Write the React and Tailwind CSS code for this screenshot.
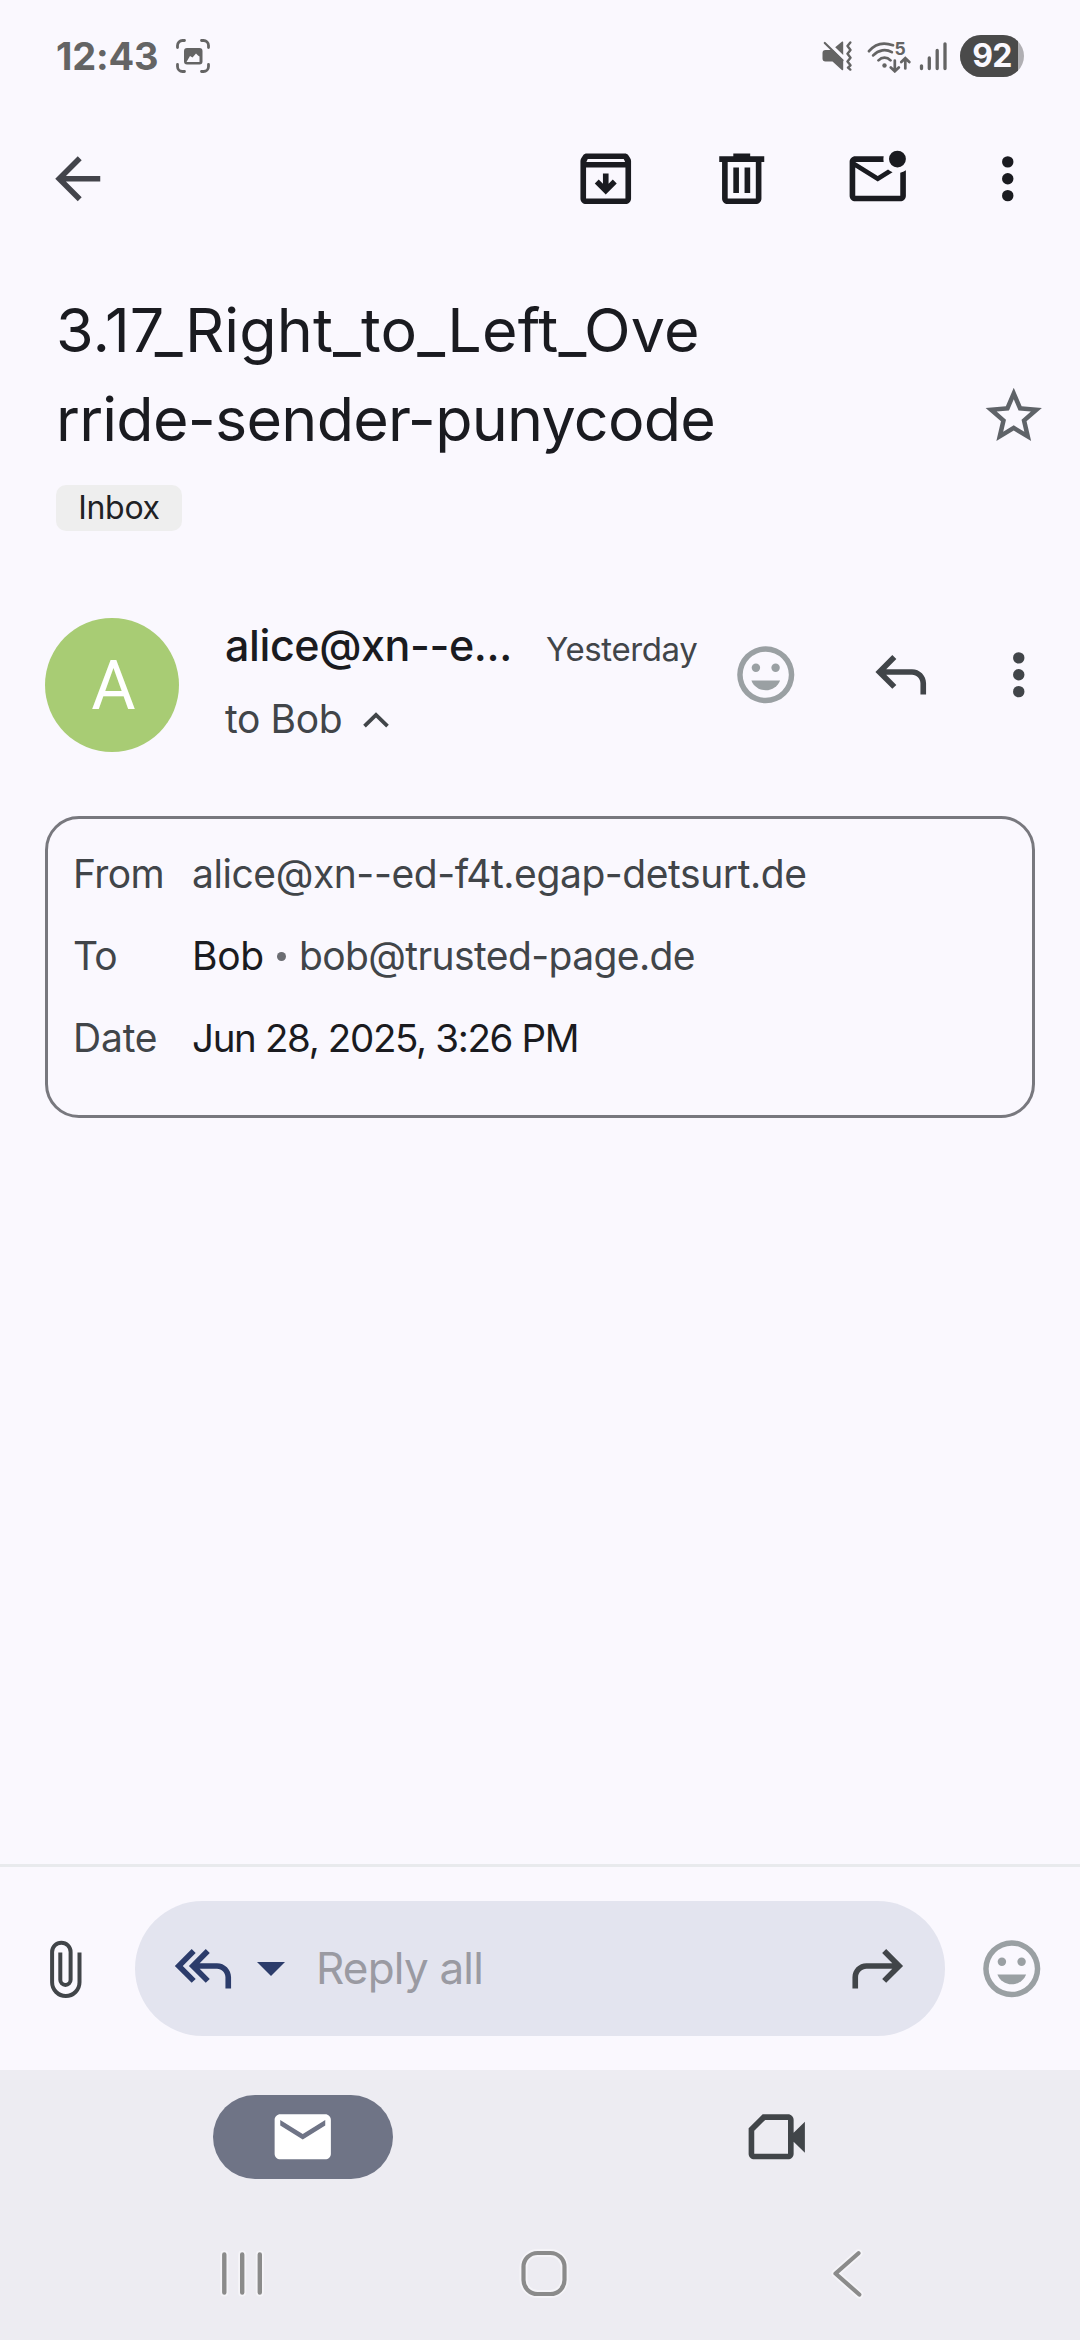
import React from "react";

function Icon({ className = "", children, ...rest }) {
  return (
    <svg viewBox="0 0 24 24" className={`block size-[67.5px] shrink-0 fill-current ${className}`} {...rest}>
      {children}
    </svg>
  );
}

const MoreIcon = ({ className }) => (
  <Icon className={className}>
    <circle cx="12" cy="6" r="2.03" />
    <circle cx="12" cy="12" r="2.03" />
    <circle cx="12" cy="18" r="2.03" />
  </Icon>
);

const SmileIcon = ({ className }) => (
  <Icon className={className}>
    <path
      fillRule="evenodd"
      d="M12 1.85A10.15 10.15 0 1 0 12 22.15 10.15 10.15 0 1 0 12 1.85zM12 3.8A8.2 8.2 0 1 1 12 20.2 8.2 8.2 0 1 1 12 3.8z"
    />
    <circle cx="8.5" cy="9.5" r="1.5" />
    <circle cx="15.5" cy="9.5" r="1.5" />
    <path d="M12 17.5c2.33 0 4.31-1.46 5.11-3.5H6.89c.8 2.04 2.78 3.5 5.11 3.5z" />
  </Icon>
);

const ReplyIcon = ({ className }) => (
  <Icon className={className}>
    <path d="M19 19v-4c0-1.65-1.35-3-3-3H6.83l3.6 3.6L9 17l-6-6 6-6 1.43 1.4-3.6 3.6H16c2.76 0 5 2.24 5 5v4z" />
  </Icon>
);

function StatusBar() {
  return (
    <div className="flex h-28 shrink-0 items-center pl-[56px] pr-[56px] text-[#646464]">
      <span className="w-[120px] whitespace-nowrap text-[38px] font-bold tracking-[-0.2px]">12:43</span>
      <svg viewBox="0 0 34 34" className="size-[34px]" fill="none" stroke="currentColor" strokeWidth="2.8" strokeLinecap="round">
        <path d="M1.5 8.5V6.5a5 5 0 0 1 5-5h2M25.5 1.5h2a5 5 0 0 1 5 5v2M32.5 25.5v2a5 5 0 0 1-5 5h-2M8.5 32.5h-2a5 5 0 0 1-5-5v-2" />
        <path
          stroke="none"
          fill="currentColor"
          fillRule="evenodd"
          d="M11 9h12.5a3 3 0 0 1 3 3v10.5a3 3 0 0 1-3 3h-12.5a3 3 0 0 1-3-3v-10.5a3 3 0 0 1 3-3zM10.5 23h13v-5.5l-1.5-1-2-2-3.5 4-2.5-1.5z"
        />
      </svg>
      <div className="ml-auto flex items-center">
        <svg viewBox="0 0 30 32" className="h-8 w-[30px]">
          <path fill="currentColor" d="M3.5 10h7.5L21.2 20v9.5c0 .8-.8.9-1.4.4L10.5 21.5h-7a3 3 0 0 1-3-3v-5.5a3 3 0 0 1 3-3zM13.2 7.3l6.6-5.5c.7-.5 1.4-.3 1.4.5V15z" />
          <path fill="none" stroke="currentColor" strokeWidth="2.2" strokeLinecap="round" d="M2.8 3 20.5 20.2" />
          <path fill="none" stroke="currentColor" strokeWidth="2.4" strokeLinecap="round" strokeLinejoin="round" d="M28.3 2.5l-2.8 3.6 3 3.8-3 3.9 3 3.9-3 3.9 3 3.7-2.5 2.3 2.3 2" />
        </svg>
        <svg viewBox="0 0 44 34" className="ml-[15px] h-[34px] w-[44px]" fill="none" stroke="currentColor" strokeWidth="2.7" strokeLinecap="round">
          <path d="M2 12.2C8.5 4.2 17.5 3.2 26 6.2M6.2 16.4C11.5 10.7 19 9.8 24.8 13.2M11.5 21.4C15 17.8 20 17.8 23.5 21.4" />
          <circle cx="17.5" cy="26.5" r="2.2" fill="currentColor" stroke="none" />
          <path d="M27.8 21.5v10.5M23.8 28.5l4 3.8 4-3.8M38.3 29.5V19.5M34.3 23l4-3.8 4 3.8" />
          <text x="27.6" y="16.2" fontSize="17.5" fontWeight="700" fill="currentColor" stroke="none" className="font-['Inter',sans-serif]">5</text>
        </svg>
        <svg viewBox="0 0 28 30" className="ml-2 h-[30px] w-7" stroke="currentColor" strokeWidth="3.3" strokeLinecap="round">
          <path d="M2.5 24.8v2.7M10.3 17v10.5M18.2 9.5v18M26 2.800v24.7" />
        </svg>
        <div className="ml-[13px] flex h-[42px] w-[64px] items-center overflow-hidden rounded-full bg-[#b0afb3]">
          <div className="flex h-full w-[58px] items-center justify-center bg-[#4a4a4a] pl-1.5 text-[32px] font-bold tracking-[-0.8px] text-[#faf8fe]">
            92
          </div>
        </div>
      </div>
    </div>
  );
}

function Toolbar() {
  return (
    <div className="flex h-[133px] shrink-0 items-center pl-[43.5px] pr-[39px] text-[#1a1b20]">
      <Icon className="text-[#43444b]">
        <path d="M20 11H7.8l5.6-5.6L12 4l-8 8 8 8 1.4-1.4L7.8 13H20z" />
      </Icon>
      <Icon className="ml-auto">
        <path
          fillRule="evenodd"
          d="M5.2 3h13.6c.5 0 .8.2 1.1.5L20.6 4.5c.3.4.4.8.4 1.2V19c0 1.1-.9 2-2 2H5c-1.1 0-2-.9-2-2V5.7c0-.4.1-.8.4-1.2l.7-1c.3-.3.6-.5 1.1-.5zM5.6 5l-.5 1h13.8l-.5-1zM5 8v11h14V8z"
        />
        <path d="M11 10.1h2v3.7l1.5-1.5 1.4 1.4-3.9 3.9-3.9-3.9 1.4-1.4 1.5 1.5z" />
      </Icon>
      <Icon className="ml-[68.5px]">
        <path
          fillRule="evenodd"
          d="M4 4h5V3h6v1h5v2h-1v13c0 1.1-.9 2-2 2H7c-1.1 0-2-.9-2-2V6H4zM7 6v13h10V6zM9 8h2v9.1H9zM13 8h2v9.1h-2z"
        />
      </Icon>
      <Icon className="ml-[68.5px] overflow-visible">
        <path
          fillRule="evenodd"
          d="M4 4h10.1a5.2 5.2 0 0 0 0 2H4l8 5 3.65-2.28c.5.45 1 .75 1.62.98L12 13 4 8v10h16V9.9A5 5 0 0 0 22 9v9c0 1.1-.9 2-2 2H4c-1.1 0-2-.9-2-2V6c0-1.1.9-2 2-2z"
        />
        <circle cx="19" cy="5" r="3" />
      </Icon>
      <MoreIcon className="ml-[62.5px]" />
    </div>
  );
}

function Subject() {
  return (
    <div className="flex h-[287px] shrink-0 pl-14 pr-[33px] pt-[41px]">
      <div className="flex flex-col items-start text-[#1a1b20]">
        <h1 className="text-[61px] font-normal leading-[89px]">
          <span className="block tracking-[0.15px]">3.17_Right_to_Left_Ove</span>
          <span className="block tracking-[-0.75px]">rride-sender-punycode</span>
        </h1>
        <span className="mt-[21px] flex h-[46px] w-[126px] items-center justify-center rounded-[10px] bg-[#eeeeee] text-[32px] leading-[46px] tracking-[-0.3px] text-[#202124]">
          Inbox
        </span>
      </div>
      <Icon className="ml-auto mt-[96px] text-[#5f6368]">
        <path d="M22 9.24l-7.19-.62L12 2 9.19 8.63 2 9.24l5.46 4.73L5.82 21 12 17.27 18.18 21l-1.63-7.03L22 9.24zM12 15.4l-3.76 2.27 1-4.28-3.32-2.88 4.38-.38L12 6.1l1.71 4.04 4.38.38-3.32 2.88 1 4.28L12 15.4z" />
      </Icon>
    </div>
  );
}

function Sender() {
  return (
    <div className="mt-[86px] flex h-[134px] shrink-0 pl-[45px] pr-[28px] text-[#414549]">
      <div className="flex size-[134px] shrink-0 items-center justify-center rounded-full bg-[#a8cc74] font-['Roboto',sans-serif] text-[68px] leading-none text-white">
        <span className="relative left-[1.5px] top-[1px]">A</span>
      </div>
      <div className="ml-[46px] flex w-[507px] flex-col pt-px">
        <div className="flex h-[52px] items-baseline leading-[52px]">
          <span className="w-[321px] whitespace-nowrap text-[43px] font-medium tracking-[-0.4px] text-[#1a1b20]">alice@xn--e...</span>
          <span className="text-[33px] tracking-[-0.4px]">Yesterday</span>
        </div>
        <div className="mt-6 flex h-12 items-center text-[39px] leading-[48px]">
          <span className="tracking-[-0.4px]">to Bob</span>
          <svg viewBox="0 0 26 16" className="ml-[21px] mt-[2px] h-4 w-[26px]" fill="none" stroke="currentColor" strokeWidth="3.8">
            <path d="M1.5 14.2 13 3l11.5 11.2" />
          </svg>
        </div>
      </div>
      <div className="flex h-[114px] flex-1 items-center">
        <SmileIcon className="text-[#9aa0a3]" />
        <ReplyIcon className="ml-[67px]" />
        <MoreIcon className="ml-auto" />
      </div>
    </div>
  );
}

function Details() {
  return (
    <div className="mx-[45px] mt-16 h-[302px] shrink-0 rounded-[34px] border-[3px] border-[#78787e] pl-[25px] pt-3.5 text-[39px] leading-[82px] text-[#414549]">
      <div className="flex">
        <span className="w-[119px] shrink-0 tracking-[-0.6px]">From</span>
        <span className="whitespace-nowrap tracking-[-0.43px]">alice@xn--ed-f4t.egap-detsurt.de</span>
      </div>
      <div className="flex items-center">
        <span className="w-[119px] shrink-0 tracking-[-1px]">To</span>
        <span className="tracking-[-0.3px] text-[#1a1b20]">Bob</span>
        <span className="ml-[13px] mr-[13px] size-[9px] rounded-full bg-[#6b6d72]" />
        <span className="whitespace-nowrap tracking-[-0.6px]">bob@trusted-page.de</span>
      </div>
      <div className="flex">
        <span className="w-[119px] shrink-0 tracking-[-0.2px]">Date</span>
        <span className="whitespace-nowrap text-[38.5px] tracking-[-1.35px] text-[#1a1b20]">Jun 28, 2025, 3:26 PM</span>
      </div>
    </div>
  );
}

function ReplyBar() {
  return (
    <div className="flex h-[206px] shrink-0 items-center border-t-[3px] border-[#e8eaed] text-[#414549]">
      <svg viewBox="0 0 32 58" className="ml-[50px] h-[58px] w-8" fill="none" stroke="currentColor" strokeWidth="4">
        <path d="M29.5 12.5V42.3a13.7 13.7 0 0 1-27.4 0V12a9.25 9.25 0 0 1 18.5 0V39.8a5.15 5.15 0 0 1-10.3 0V12.5" />
      </svg>
      <div className="ml-[53px] flex h-[135px] w-[810px] items-center rounded-full bg-[#e3e4ef] pl-[37px] pr-[34px]">
        <Icon className="text-[#2c3c6b]">
          <path d="M7 17L1 11l6-6 1.42 1.4L3.83 11l4.6 4.6zM19 19v-4c0-1.65-1.35-3-3-3H9.83l3.6 3.6L12 17l-6-6 6-6 1.43 1.4L9.83 10H16c2.76 0 5 2.24 5 5v4z" />
        </Icon>
        <svg viewBox="0 0 28 14" className="ml-[17.5px] h-3.5 w-7 fill-[#2c3c6b]">
          <path d="M0 0h28L14 14z" />
        </svg>
        <span className="ml-[31px] whitespace-nowrap pb-0.5 text-[44px] tracking-[-0.8px] text-[#9a9aa2]">Reply all</span>
        <ReplyIcon className="ml-auto -scale-x-100" />
      </div>
      <SmileIcon className="ml-[33px] text-[#9aa0a3]" />
    </div>
  );
}

function BottomNav() {
  return (
    <div className="flex h-[270px] shrink-0 flex-col bg-[#edecf2]">
      <div className="flex pt-[25px]">
        <div className="ml-[213px] flex h-[84px] w-[180px] items-center justify-center rounded-full bg-[#6f7486] text-white">
          <Icon>
            <path d="M20 4H4c-1.1 0-2 .9-2 2v12c0 1.1.9 2 2 2h16c1.1 0 2-.9 2-2V6c0-1.1-.9-2-2-2zm0 4l-8 5-8-5V6l8 5 8-5v2z" />
          </Icon>
        </div>
        <Icon className="ml-[350px] mt-2 text-[#414549]">
          <path fillRule="evenodd" d="M7 4h9c1.1 0 2 .9 2 2v4.6l4-3.9v11l-4-3.9V18c0 1.1-.9 2-2 2H4c-1.1 0-2-.9-2-2V9zM7.9 6L4 9.9V18h12V6z" />
        </Icon>
      </div>
      <div className="mt-[65px] flex h-[60px] items-center text-[#8b8b8b]">
        <svg viewBox="0 0 48 60" className="ml-[218px] h-[60px] w-12" fill="none" strokeLinecap="round">
          <path stroke="#f5f4f8" strokeWidth="8" d="M6.3 10.5v38M24.2 10.5v38M41.8 10.5v38" />
          <path stroke="currentColor" strokeWidth="4.4" d="M6.3 10.5v38M24.2 10.5v38M41.8 10.5v38" />
        </svg>
        <svg viewBox="0 0 60 60" className="ml-[248px] size-[60px]" fill="none">
          <rect x="9.5" y="9" width="41" height="41" rx="14" stroke="#f5f4f8" strokeWidth="8" />
          <rect x="9.5" y="9" width="41" height="41" rx="14" stroke="currentColor" strokeWidth="4.2" />
        </svg>
        <svg viewBox="0 0 48 60" className="ml-[249px] h-[60px] w-12" fill="none" strokeLinecap="round" strokeLinejoin="round">
          <path stroke="#f5f4f8" strokeWidth="8" d="M35.5 9.2 12.5 29.5 36.3 50.5" />
          <path stroke="currentColor" strokeWidth="4.2" d="M35.5 9.2 12.5 29.5 36.3 50.5" />
        </svg>
      </div>
    </div>
  );
}

export default function App() {
  return (
    <div className="flex h-[2340px] w-[1080px] flex-col overflow-hidden bg-[#faf8fe] font-['Inter',sans-serif]">
      <StatusBar />
      <Toolbar />
      <Subject />
      <Sender />
      <Details />
      <main className="flex-1" />
      <ReplyBar />
      <BottomNav />
    </div>
  );
}
